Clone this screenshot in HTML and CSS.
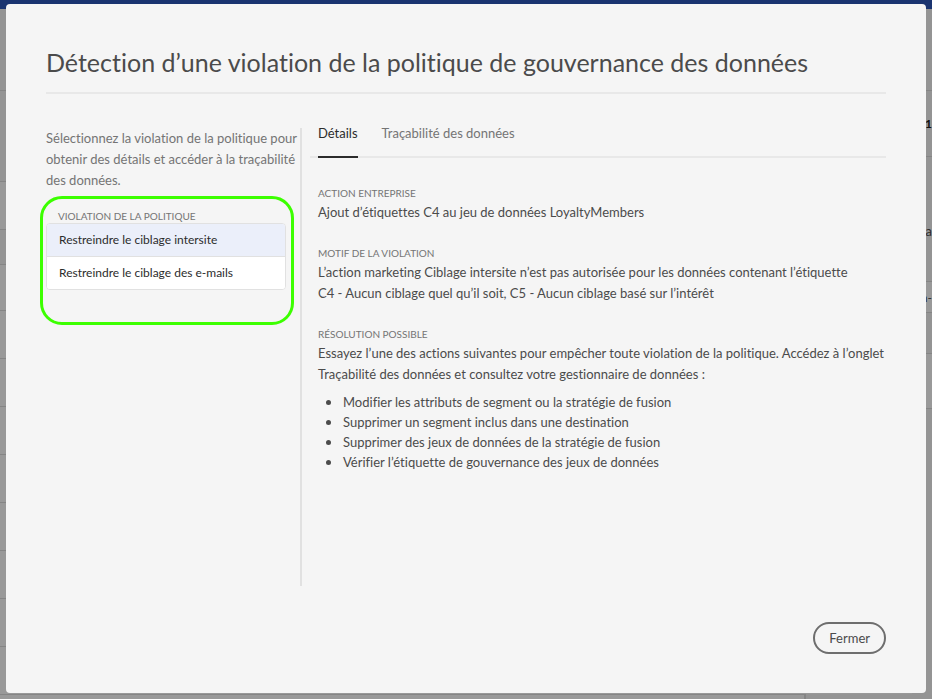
FILE: index.html
```html
<!DOCTYPE html>
<html lang="fr">
<head>
<meta charset="utf-8">
<meta name="viewport" content="width=device-width, initial-scale=1">
<title>Gouvernance des données</title>
<link rel="stylesheet" href="styles.css">
</head>
<body>
<div class="page">
  <div class="backdrop" aria-hidden="true">
    <div class="topbar"></div>
    <div class="columns">
      <div class="rail">
        <div class="cell toolbar"></div>
        <div class="cell heading"></div>
        <div class="cell row"></div>
        <div class="cell gap"></div>
        <div class="cell filter"></div>
        <div class="cell row"></div>
        <div class="cell row"></div>
        <div class="cell row"></div>
        <div class="cell row"></div>
        <div class="cell row"></div>
        <div class="cell row"></div>
        <div class="cell row"></div>
      </div>
      <div class="rail rail-right">
        <div class="cell toolbar"></div>
        <div class="cell name">p1</div>
        <div class="cell summary">a</div>
        <div class="cell field">n-</div>
        <div class="cell option"></div>
        <div class="cell block"></div>
      </div>
    </div>
    <div class="statusbar"><div class="status-main"></div><div class="status-side"></div></div>
  </div>

  <section class="dialog" role="dialog" aria-labelledby="dialog-title">
    <h1 id="dialog-title">Détection d’une violation de la politique de gouvernance des données</h1>
    <div class="body">
      <aside class="side">
        <p class="intro">Sélectionnez la violation de la politique pour obtenir des détails et accéder à la traçabilité des données.</p>
        <div class="highlight">
          <h2 class="list-title" id="list-title">VIOLATION DE LA POLITIQUE</h2>
          <div class="list" role="group" aria-labelledby="list-title">
            <button class="item selected" type="button">Restreindre le ciblage intersite</button>
            <button class="item" type="button">Restreindre le ciblage des e-mails</button>
          </div>
        </div>
      </aside>
      <div class="main">
        <div class="tabs" role="tablist">
          <button class="tab active" type="button" role="tab" aria-selected="true">Détails</button>
          <button class="tab" type="button" role="tab" aria-selected="false">Traçabilité des données</button>
        </div>
        <div class="panel" role="tabpanel">
          <section>
            <h3>ACTION ENTREPRISE</h3>
            <p>Ajout d’étiquettes C4 au jeu de données LoyaltyMembers</p>
          </section>
          <section>
            <h3>MOTIF DE LA VIOLATION</h3>
            <p>L’action marketing Ciblage intersite n’est pas autorisée pour les données contenant l’étiquette<br>C4 - Aucun ciblage quel qu’il soit, C5 - Aucun ciblage basé sur l’intérêt</p>
          </section>
          <section>
            <h3>RÉSOLUTION POSSIBLE</h3>
            <p>Essayez l’une des actions suivantes pour empêcher toute violation de la politique. Accédez à l’onglet Traçabilité des données et consultez votre gestionnaire de données :</p>
            <ul>
              <li>Modifier les attributs de segment ou la stratégie de fusion</li>
              <li>Supprimer un segment inclus dans une destination</li>
              <li>Supprimer des jeux de données de la stratégie de fusion</li>
              <li>Vérifier l’étiquette de gouvernance des jeux de données</li>
            </ul>
          </section>
        </div>
      </div>
    </div>
    <footer><button class="close" type="button">Fermer</button></footer>
  </section>
</div>
</body>
</html>
```
FILE: styles.css
```css
* { box-sizing: border-box; }

body {
  margin: 0;
  font-family: Lato, "Noto Sans", sans-serif;
  font-size: 13px;
  font-variant-ligatures: no-common-ligatures;
  line-height: 21px;
  color: #4b4b4b;
}

button { font: inherit; color: inherit; cursor: pointer; }
h1, h2, h3, p, ul { margin: 0; }

.page { display: grid; min-height: 100vh; overflow: hidden; }
.backdrop, .dialog { grid-area: 1 / 1; }

.backdrop { display: flex; flex-direction: column; background: #999; }
.topbar { height: 9px; background: #1a3470; }
.columns { display: flex; flex: 1; justify-content: space-between; }
.rail { width: 20px; }
.rail-right { background: #949494; color: #2c2c2c; }
.cell { border-bottom: 1px solid #858585; background: #949494; }
.toolbar { height: 82px; }
.heading { height: 91px; }
.row { height: 48px; background: #999; }
.gap { height: 35px; }
.filter { height: 46px; background: #999; }
.rail-right .cell { display: flex; align-items: center; justify-content: flex-end; }
.name { height: 66px; color: #111; font-size: 12px; font-weight: 700; }
.summary { height: 125px; padding-top: 24px; }
.field { height: 31px; background: #999; font-size: 12px; }
.option { height: 41px; }
.block { height: 55px; background: #999; }
.statusbar { display: flex; height: 5px; background: #949494; }
.status-main { flex: 1; border-top: 1px solid #858585; border-right: 2px solid #858585; background: #999; }
.status-side { width: 126px; }

.dialog {
  display: flex;
  flex-direction: column;
  margin: 4px 6px 6px;
  padding: 0 40px 39px;
  border-radius: 4px;
  background: #f5f5f5;
}

h1 {
  padding: 39px 0 11px;
  border-bottom: 2px solid #e8e8e8;
  font-size: 25px;
  font-weight: 400;
  line-height: 38px;
}

.body { display: flex; flex: 1; margin-top: 34px; }
.side { flex: 0 0 256px; border-right: 2px solid #e1e1e1; }
.intro { color: #747474; }

.highlight {
  min-height: 129px;
  margin: 5px 6px 0 -6px;
  padding: 10px 5px 0 3px;
  border: 3px solid #3cff00;
  border-radius: 22px;
}

.list-title { padding-left: 12px; color: #747474; font-size: 10px; font-weight: 400; line-height: 14px; }
.list { overflow: hidden; border: 1px solid #e1e1e1; border-radius: 4px; background: #fff; }

.item {
  display: block;
  width: 100%;
  padding: 6px 12px;
  border: 0;
  background: #fff;
  color: #2c2c2c;
  font-size: 12px;
  line-height: 20px;
  text-align: left;
}
.item.selected { border-bottom: 1px solid #e1e1e1; background: #ebeffa; }

.main { flex: 1; min-width: 0; padding-left: 8px; }
.tabs { display: flex; gap: 24px; padding-left: 8px; border-bottom: 2px solid #e8e8e8; }
.tab { margin-bottom: -2px; padding: 0 0 18px; border: 0; border-bottom: 2px solid transparent; background: none; color: #747474; line-height: 10px; }
.tab.active { border-color: #2c2c2c; color: #2c2c2c; }

.panel { display: flex; flex-direction: column; gap: 22px; padding: 27px 0 0 8px; }
h3 { color: #747474; font-size: 10px; font-weight: 400; line-height: 17px; }
ul { margin-top: 6px; padding-left: 25px; line-height: 20px; }
li { height: 20px; }
li::marker { font-size: 16px; }

footer { display: flex; justify-content: flex-end; margin-top: 36px; }
.close { height: 32px; padding: 0 14px; border: 2px solid #6e6e6e; border-radius: 16px; background: none; }
```
